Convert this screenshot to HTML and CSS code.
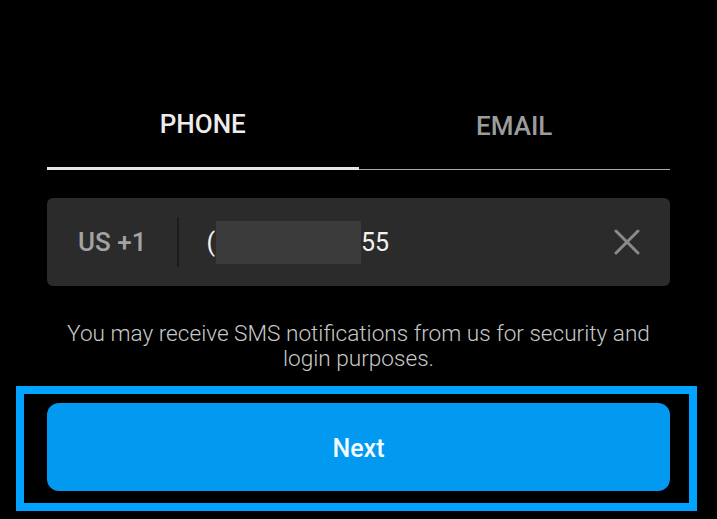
FILE: index.html
```html
<!DOCTYPE html>
<html lang="en">
<head>
  <meta charset="UTF-8">
  <meta name="viewport" content="width=device-width, initial-scale=1.0">
  <title>Sign up - Phone</title>
  <link rel="stylesheet" href="styles.css">
</head>
<body>
  <div class="page">
    <div class="form">
      <!-- Phone / Email tabs -->
      <div class="tabs">
        <div class="tab active">PHONE</div>
        <div class="tab">EMAIL</div>
      </div>

      <!-- Phone input -->
      <div class="phone-field">
        <span class="country">US +1</span>
        <span class="divider"></span>
        <span class="number">(<span class="redacted"></span>55</span>
        <svg class="clear" width="26" height="26" viewBox="0 0 26 26">
          <path d="M2 2 L24 24 M24 2 L2 24" stroke="#8a8a8a" stroke-width="3" stroke-linecap="round"/>
        </svg>
      </div>

      <p class="note">You may receive SMS notifications from us for security and<br>login purposes.</p>
    </div>

    <div class="highlight">
      <button class="next-btn">Next</button>
    </div>
  </div>
</body>
</html>
```

FILE: styles.css
```css
body {
  margin: 0;
  padding: 0;
  background: #000;
  font-family: Roboto, "Noto Sans", Arial, sans-serif;
}
.page {
  width: 717px;
  height: 519px;
  padding-top: 100px;
  box-sizing: border-box;
  overflow: hidden;
}
.form {
  padding: 0 47px;
}
.tabs {
  display: flex;
  align-items: flex-end;
}
.tab {
  flex: 1;
  text-align: center;
  font-size: 26px;
  line-height: 26px;
  font-weight: 500;
  color: #9c9c9c;
  padding-top: 13px;
  height: 70px;
  box-sizing: border-box;
  border-bottom: 1px solid #a8a8a8;
}
.tab.active {
  color: #ececec;
  padding-top: 11px;
  border-bottom: 3px solid #e6e6e6;
}
.phone-field {
  margin-top: 28px;
  height: 88px;
  background: #2b2b2b;
  border-radius: 6px;
  display: flex;
  align-items: center;
  padding: 0 30px 0 31px;
}
.country {
  font-size: 26px;
  font-weight: 500;
  color: #a3a3a3;
}
.divider {
  width: 2px;
  height: 50px;
  background: #1c1c1c;
  margin: 0 27px 0 31px;
}
.number {
  flex: 1;
  font-size: 25px;
  color: #f2f2f2;
  display: flex;
  align-items: center;
}
.redacted {
  display: inline-block;
  width: 145px;
  height: 43px;
  background: #3b3b3b;
  margin-left: 1px;
}
.note {
  margin: 35px 0 0;
  text-align: center;
  font-size: 22.6px;
  line-height: 25px;
  font-weight: 300;
  color: #c8c8c8;
  white-space: nowrap;
}
.highlight {
  margin: 15px 0 0 16px;
  width: 681px;
  box-sizing: border-box;
  border: 8px solid #00a3ff;
  padding: 9px 19px 12px 23px;
}
.next-btn {
  display: block;
  width: 100%;
  height: 88px;
  border: none;
  border-radius: 12px;
  background: #0299f1;
  color: #f4fbff;
  font-family: Roboto, Arial, sans-serif;
  font-size: 25px;
  font-weight: 500;
  padding-top: 3px;
  cursor: pointer;
}
```
